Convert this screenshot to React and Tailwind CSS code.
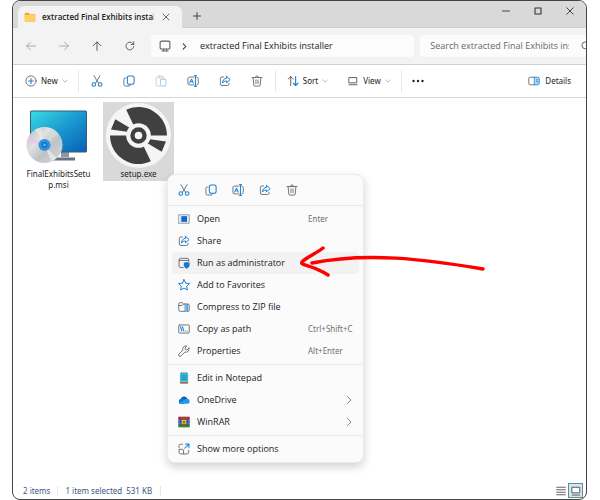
import React from "react";
import clsx from "clsx";

const GRAY = "#5c5c5c";
const BLUE = "#1580d8";

function Icon({ children, className = "size-3", box = "0 0 16 16" }) {
  return (
    <svg
      viewBox={box}
      className={clsx("shrink-0", className)}
      fill="none"
      stroke={GRAY}
      strokeWidth="1.1"
      strokeLinecap="round"
      strokeLinejoin="round"
      aria-hidden="true"
    >
      {children}
    </svg>
  );
}

const CutIcon = () => (
  <Icon>
    <path d="M4 1l5.800 9.800M12 1L6.200 10.800" />
    <circle cx="3.800" cy="12.700" r="2.400" stroke={BLUE} strokeWidth="1.400" />
    <circle cx="12.200" cy="12.700" r="2.400" stroke={BLUE} strokeWidth="1.400" />
  </Icon>
);

const CopyIcon = () => (
  <Icon>
    <path d="M4 4H3.2A2 2 0 0 0 1.2 6v6.5a2.2 2.2 0 0 0 2.2 2.2H8a2.2 2.2 0 0 0 2-1.8" />
    <rect x="5.8" y="1.3" width="9" height="11" rx="2.2" stroke={BLUE} strokeWidth="1.4" />
  </Icon>
);

const PasteIcon = () => (
  <Icon className="size-3 opacity-35">
    <path d="M5 2.8H3a1.5 1.5 0 0 0-1.5 1.5v9A1.5 1.5 0 0 0 3 14.8h3M10 2.8h1.2a1.5 1.5 0 0 1 1.500 1.300" />
    <rect x="4.8" y="1.3" width="5" height="2.6" rx="1.2" />
    <rect x="7.2" y="5.8" width="7.3" height="9" rx="1.5" stroke={BLUE} strokeWidth="1.4" />
  </Icon>
);

const RenameIcon = () => (
  <Icon>
    <path d="M9.3 2.8H3.4a2.2 2.2 0 0 0-2.2 2.2v6a2.2 2.2 0 0 0 2.2 2.2h5.9M13 2.8a2.2 2.2 0 0 1 2 2.2v6a2.2 2.2 0 0 1-2 2.2" />
    <path d="M3.6 10.8L6 5.2l2.4 5.6M4.5 9h3M11.3 1v14M9.8.8h3M9.8 15.2h3" stroke={BLUE} strokeWidth="1.3" />
  </Icon>
);

const ShareIcon = () => (
  <Icon>
    <path d="M6 2.6H4A2.2 2.2 0 0 0 1.8 4.8v7A2.2 2.2 0 0 0 4 14h7.2a2.2 2.2 0 0 0 2.2-2.2v-.9" />
    <path d="M10 1.8l4.8 4.4L10 10.4V8C7.4 8 5.8 8.8 4.6 10.8 4.8 7.2 6.6 4.5 10 4.2z" stroke={BLUE} strokeWidth="1.3" />
  </Icon>
);

const TrashIcon = () => (
  <Icon>
    <path d="M1.4 3.4h13.2M2.8 3.4l.9 10a1.6 1.6 0 0 0 1.600 1.400h5.400a1.600 1.600 0 0 0 1.600-1.400l.9-10M6 3.200a2 2 0 0 1 4 0M6.600 6.500v5M9.400 6.500v5" />
  </Icon>
);

const ChevronDown = () => (
  <Icon className="size-[6px]">
    <path d="M2 5l6 6 6-6" strokeWidth="1.5" stroke="#888" />
  </Icon>
);

const OpenIcon = () => (
  <Icon>
    <rect x="1" y="2.3" width="14" height="11.4" fill="#e4eaf0" stroke="#8b929a" />
    <rect x="4.4" y="4.2" width="7.6" height="7.6" fill="#0f6cc4" stroke="none" />
  </Icon>
);

const AdminIcon = () => (
  <Icon>
    <path d="M7 14H3.6a2.2 2.2 0 0 1-2.2-2.2V4A2.2 2.2 0 0 1 3.6 1.8h8.6A2.2 2.2 0 0 1 14.4 4v2M1.6 4.6h12.6" />
    <path d="M11.6 6.4c1.1.8 2.2 1.1 3.9 1.200v3.200c0 2.100-1.400 3.800-3.900 4.800-2.500-1-3.900-2.700-3.900-4.800V7.600c1.700-.1 2.800-.4 3.900-1.200z" fill="#0f78d4" stroke="none" />
  </Icon>
);

const StarIcon = () => (
  <Icon>
    <path d="M8 .8l2.200 4.700 5.100.6-3.800 3.500 1 5.100L8 12.200l-4.500 2.500 1-5.100L.7 6.100l5.100-.6z" stroke={BLUE} strokeWidth="1.3" />
  </Icon>
);

const ZipIcon = () => (
  <Icon>
    <path d="M9 13.8H3a2 2 0 0 1-2-2V4.2a2 2 0 0 1 2-2h2.6l2 1.8H13a2 2 0 0 1 2 2v5.8a2 2 0 0 1-2 2h-.4M1.2 6h4.4l2-2" />
    <path d="M9.4 4.2v9.4h3.4V4.2M11.2 5.4v1.4M11.2 8.2v1.4M11.2 11v1" stroke={BLUE} />
  </Icon>
);

const PathIcon = () => (
  <Icon>
    <rect x="1" y="2.6" width="14" height="10.8" rx="1.2" />
    <path d="M3.4 5l1.6 5.6M6 5l1.6 5.6M9.6 10.6h.2M12 10.6h.2" stroke={BLUE} strokeWidth="1.4" />
  </Icon>
);

const WrenchIcon = () => (
  <Icon>
    <path d="M14.600 4.200l-2.700 2.500-2-.6-.6-2.100 2.500-2.600a4.200 4.200 0 0 0-5.300 5.400L1.300 12a1.700 1.700 0 0 0 2.600 2.600l5.300-5.200a4.200 4.200 0 0 0 5.400-5.200z" />
  </Icon>
);

const NotepadIcon = () => (
  <Icon>
    <rect x="2.600" y="1.600" width="11" height="12" rx="1" fill="#42bfe2" stroke="none" />
    <path d="M2.600 13.400h11v1.200a.9.9 0 0 1-.9.9H3.500a.9.9 0 0 1-.9-.9z" fill="#b5704a" stroke="none" />
    <path d="M5 5.200h6.400M5 7.600h6.400M5 10h6.400" stroke="#167ba3" />
    <path d="M4.600.8v1.600M6.900.8v1.600M9.200.8v1.600M11.500.8v1.600" stroke="#2b6d8a" />
  </Icon>
);

const OneDriveIcon = () => (
  <Icon>
    <g stroke="none">
      <path d="M3.600 6.800a4.700 4.700 0 0 1 8.800-.9L7.600 13H3.600A3.300 3.300 0 0 1 3.600 6.800z" fill="#0f5fb8" />
      <path d="M3.400 6.800c2.600-.9 4.600.2 7 1.900L3.400 13A3.200 3.200 0 0 1 3.400 6.800z" fill="#1178d0" />
      <path d="M11.800 6.200a3.400 3.400 0 0 1 .6 6.800H3.400c-.9 0-1.600-.3-2.200-.8L9 7.400a4.300 4.300 0 0 1 2.800-1.200z" fill="#1f9bec" />
    </g>
  </Icon>
);

const WinRarIcon = () => (
  <Icon>
    <g stroke="none">
      <rect x=".3" y="1" width="15.400" height="4.600" fill="#b8324e" />
      <rect x=".3" y="5.600" width="15.400" height="4.600" fill="#3b62c4" />
      <rect x=".3" y="10.200" width="15.400" height="4.800" fill="#2f8a41" />
      <rect x="6" y="1" width="4" height="14" fill="#8a5a26" />
      <rect x="5.200" y="5.400" width="5.600" height="4.800" fill="#e8c24a" />
      <rect x="6.900" y="6.800" width="2.200" height="2" fill="#5c3615" />
      <path d="M2.400 1h1v14h-1zM12.600 1h1v14h-1z" fill="#251f38" opacity=".5" />
    </g>
  </Icon>
);

const MoreOptionsIcon = () => (
  <Icon>
    <path d="M6.200 1.600H3.600a2.200 2.200 0 0 0-2.200 2.200V6M1.400 8.800v3.600a2.200 2.200 0 0 0 2.200 2.200h8.400a2.200 2.200 0 0 0 2.200-2.200V9.800M1.600 8.400h3.600a2.200 2.200 0 0 1 2.200 2.200v3.800" />
    <path d="M9.800 1.400h4.800v4.800M14.400 1.600L9 7" stroke={BLUE} strokeWidth="1.400" />
  </Icon>
);

const FolderIcon = () => (
  <Icon className="size-3">
    <path d="M1 3.200c0-.6.4-1 1-1h3.800l1.800 1.700H14c.6 0 1 .4 1 1v8.300c0 .6-.4 1-1 1H2c-.6 0-1-.4-1-1z" fill="#eaa92c" stroke="none" />
    <path d="M1 6.400c0-.6.4-1 1-1h4l1.600-1H14c.6 0 1 .4 1 1v7.800c0 .6-.4 1-1 1H2c-.6 0-1-.4-1-1z" fill="#ffd062" stroke="none" />
  </Icon>
);

function InstallerIcon() {
  return (
    <svg viewBox="0 0 65 65" className="size-[65px]" aria-hidden="true">
      <defs>
        <linearGradient id="screen" x1="0" y1="0" x2="1" y2="1">
          <stop offset="0" stopColor="#38dbe2" />
          <stop offset=".5" stopColor="#1a98d0" />
          <stop offset="1" stopColor="#0861b5" />
        </linearGradient>
        <linearGradient id="disc" x1="0" y1="0" x2="1" y2="1">
          <stop offset="0" stopColor="#b6bbbd" />
          <stop offset=".35" stopColor="#dfe1e2" />
          <stop offset=".6" stopColor="#bfc3c5" />
          <stop offset="1" stopColor="#d8dadb" />
        </linearGradient>
      </defs>
      <path d="M35 48h8v6h-8z" fill="#8d9aa5" />
      <path d="M27 54.500h22v3H27z" fill="#66737f" />
      <rect x="4" y="7.500" width="57" height="42" rx="1.500" fill="#3d5c70" />
      <rect x="5" y="8.500" width="55" height="40" rx=".5" fill="url(#screen)" />
      <circle cx="18.500" cy="42" r="18" fill="url(#disc)" />
      <path d="M18.500 42L1.500 38.500l1.800-5z" fill="#ecc6e6" />
      <path d="M18.500 42l9-15.500 4.500 4z" fill="#cfe0d3" opacity=".7" />
      <path d="M18.500 42l7 16.500 5-3.500z" fill="#eff0f0" opacity=".7" />
      <path d="M18.500 42L9 26.500l6-2z" fill="#eceded" opacity=".6" />
      <circle cx="18.500" cy="42" r="6" fill="#3293dc" />
      <circle cx="18.500" cy="42" r="3" fill="#1470c0" />
      <circle cx="18.500" cy="42" r="1.400" fill="#5ab4f4" />
    </svg>
  );
}

function DiscIcon() {
  return (
    <svg viewBox="0 0 65 65" className="size-[65px]" aria-hidden="true">
      <circle cx="32.500" cy="32.500" r="32.500" fill="#f5f5f5" />
      <g fill="#404040">
        <path d="M32.500 32.500L20.200 6.800A28.500 28.500 0 0 1 61 32.500z" />
        <path d="M32.500 32.500L44.800 58.200A28.500 28.500 0 0 1 4 32.500z" />
        <path d="M21 28.800L5 26.500l4.300-10.200L24 25z" />
        <path d="M44 36.200l16 2.300-4.300 10.200L41 40z" />
      </g>
      <circle cx="32.500" cy="32.500" r="12.300" fill="#f5f5f5" />
      <circle cx="32.500" cy="32.500" r="6" fill="none" stroke="#404040" strokeWidth="4.400" />
    </svg>
  );
}

const menuGroups = [
  [
    { label: "Open", icon: OpenIcon, keys: "Enter" },
    { label: "Share", icon: ShareIcon },
    { label: "Run as administrator", icon: AdminIcon, active: true },
    { label: "Add to Favorites", icon: StarIcon },
    { label: "Compress to ZIP file", icon: ZipIcon },
    { label: "Copy as path", icon: PathIcon, keys: "Ctrl+Shift+C" },
    { label: "Properties", icon: WrenchIcon, keys: "Alt+Enter" },
  ],
  [
    { label: "Edit in Notepad", icon: NotepadIcon },
    { label: "OneDrive", icon: OneDriveIcon, submenu: true },
    { label: "WinRAR", icon: WinRarIcon, submenu: true },
  ],
  [{ label: "Show more options", icon: MoreOptionsIcon }],
];

const quickActions = [
  { label: "Cut", icon: CutIcon },
  { label: "Copy", icon: CopyIcon },
  { label: "Rename", icon: RenameIcon },
  { label: "Share", icon: ShareIcon },
  { label: "Delete", icon: TrashIcon },
];

const toolbarActions = [
  { label: "Cut", icon: CutIcon },
  { label: "Copy", icon: CopyIcon },
  { label: "Paste", icon: PasteIcon, disabled: true },
  { label: "Rename", icon: RenameIcon },
  { label: "Share", icon: ShareIcon },
  { label: "Delete", icon: TrashIcon },
];

function TitleBar() {
  return (
    <header className="flex items-end border-b border-[#cfcfcf] bg-[#d9d9d9] pt-1 pl-[5px]">
      <div className="-mb-px flex h-[22px] w-[164px] items-center rounded-t-md bg-[#f3f3f3] px-1.5">
        <FolderIcon />
        <span className="ml-1.5 w-28 overflow-hidden text-[8px] font-semibold whitespace-nowrap text-[#222]">
          extracted Final Exhibits installer
        </span>
        <button aria-label="Close tab" className="ml-2">
          <Icon className="size-2">
            <path d="M2 2l12 12M14 2L2 14" strokeWidth="1.8" />
          </Icon>
        </button>
      </div>
      <button aria-label="New tab" className="ml-[11px] flex h-[22px] items-center">
        <Icon className="size-2">
          <path d="M8 1v14M1 8h14" strokeWidth="2" stroke="#444" />
        </Icon>
      </button>
      <div className="mb-3 ml-auto flex items-center gap-6 pr-3">
        <button aria-label="Minimize">
          <Icon className="size-2">
            <path d="M1 8h14" strokeWidth="1.8" stroke="#333" />
          </Icon>
        </button>
        <button aria-label="Maximize">
          <Icon className="size-2">
            <path d="M2 2h12v12H2z" strokeWidth="2.200" stroke="#333" />
          </Icon>
        </button>
        <button aria-label="Close">
          <Icon className="size-2">
            <path d="M1.500 1.500l13 13M14.500 1.500l-13 13" strokeWidth="1.800" stroke="#333" />
          </Icon>
        </button>
      </div>
    </header>
  );
}

function NavBar() {
  return (
    <nav className="flex items-center border-b border-[#cfcfcf] bg-[#f3f3f3] py-[7px] pl-[13px]">
      <div className="flex items-center gap-[23px]">
        <button aria-label="Back" disabled>
          <Icon className="size-[10px] opacity-50">
            <path d="M15 8H1M7 2L1 8l6 6" strokeWidth="1.500" />
          </Icon>
        </button>
        <button aria-label="Forward" disabled>
          <Icon className="size-[10px] opacity-50">
            <path d="M1 8h14M9 2l6 6-6 6" strokeWidth="1.500" />
          </Icon>
        </button>
        <button aria-label="Up">
          <Icon className="size-[10px]">
            <path d="M8 15V1.500M2 7.500l6-6 6 6" strokeWidth="1.600" />
          </Icon>
        </button>
        <button aria-label="Refresh">
          <Icon className="size-[10px]">
            <path d="M14 8.500A6.200 6.200 0 1 1 12.500 4L14 5.600M14 1.200v4.400H9.800" strokeWidth="1.500" />
          </Icon>
        </button>
      </div>
      <div className="ml-4 flex h-[22px] min-w-0 flex-[272] items-center rounded bg-[#fcfcfc] pl-2">
        <Icon>
          <rect x="1.500" y="1.500" width="13" height="10.500" rx="1.800" strokeWidth="1.400" />
          <path d="M6 12.500v2M10 12.500v2M4 14.600h8" strokeWidth="1.400" />
        </Icon>
        <Icon className="ml-2.5 size-[7px]">
          <path d="M5 2l6 6-6 6" strokeWidth="2.400" stroke="#333" />
        </Icon>
        <span className="ml-3 text-[9px] whitespace-nowrap text-[#222]">
          extracted Final Exhibits installer
        </span>
      </div>
      <label className="ml-1.5 flex h-[22px] min-w-0 flex-[166] items-center overflow-hidden rounded-l bg-[#fcfcfc] pl-[10px]">
        <input
          type="text"
          aria-label="Search"
          placeholder="Search extracted Final Exhibits installer"
          className="w-[139px] shrink-0 text-[9px] outline-none placeholder:text-[#686868]"
        />
        <Icon className="ml-3 size-[10px]">
          <circle cx="7" cy="7" r="5.500" strokeWidth="1.500" />
          <path d="M11 11l4 4" />
        </Icon>
      </label>
    </nav>
  );
}

function ToolBar() {
  return (
    <div className="flex h-[33px] items-center border-b border-[#d6d6d6] bg-white pr-[15px] pl-3 font-['Noto_Sans',sans-serif] text-[8px] text-[#222]">
      <button className="flex items-center">
        <Icon>
          <circle cx="8" cy="8" r="6.800" />
          <path d="M8 4.800v6.400M4.800 8h6.400" stroke={BLUE} strokeWidth="1.400" />
        </Icon>
        <span className="mr-1 ml-1">New</span>
        <ChevronDown />
      </button>
      <span className="ml-[10px] h-[22px] w-px bg-[#e8e8e8]" />
      <div className="ml-3 flex items-center gap-[20px]">
        {toolbarActions.map(({ label, icon: Glyph, disabled }) => (
          <button key={label} aria-label={label} disabled={disabled}>
            <Glyph />
          </button>
        ))}
      </div>
      <span className="ml-3 h-[22px] w-px bg-[#e8e8e8]" />
      <button className="ml-[11px] flex items-center">
        <Icon>
          <path d="M5 14V2M1.500 5.500L5 2l3.500 3.500" strokeWidth="1.300" />
          <path d="M11.500 2v12M8.500 11l3 3 3-3" stroke={BLUE} strokeWidth="1.500" />
        </Icon>
        <span className="mr-1 ml-1">Sort</span>
        <ChevronDown />
      </button>
      <button className="ml-5 flex items-center">
        <Icon className="size-[10px]">
          <path d="M2 2.500h12v8.500H2zM1.500 14h13" strokeWidth="1.500" />
        </Icon>
        <span className="mr-1 ml-[5px]">View</span>
        <ChevronDown />
      </button>
      <span className="ml-[10px] h-[22px] w-px bg-[#e8e8e8]" />
      <button aria-label="See more" className="ml-[10px]">
        <Icon>
          <g fill="#222" stroke="none">
            <circle cx="2" cy="8" r="1.600" />
            <circle cx="8" cy="8" r="1.600" />
            <circle cx="14" cy="8" r="1.600" />
          </g>
        </Icon>
      </button>
      <button className="ml-auto flex items-center gap-[5px]">
        <Icon>
          <path d="M9 13H3a2 2 0 0 1-2-2V5a2 2 0 0 1 2-2h6" />
          <path d="M9 3h4a2 2 0 0 1 2 2v6a2 2 0 0 1-2 2H9z" stroke={BLUE} fill="#b9dcf7" />
          <path d="M11.200 6.500h1.800M11.200 9h1.800" stroke={BLUE} />
        </Icon>
        Details
      </button>
    </div>
  );
}

function FileTile({ name, selected, children }) {
  return (
    <button
      className={clsx(
        "flex w-[71px] flex-col items-center self-start px-[3px] pt-px pb-0.5 font-['Noto_Sans',sans-serif] text-[8px] leading-[11px] text-[#222]",
        selected && "bg-[#d9d9d9]"
      )}
    >
      {children}
      <span className="w-full break-all">{name}</span>
    </button>
  );
}

function ContextMenu() {
  return (
    <div
      role="menu"
      className="absolute top-[76px] left-[154px] w-[197px] rounded-lg border border-[#ececec] bg-[#fbfbfb] shadow-[0_4px_10px_rgba(0,0,0,0.18)]"
    >
      <div className="flex h-[30px] items-center gap-[15px] pl-[10px]">
        {quickActions.map(({ label, icon: Glyph }) => (
          <button key={label} role="menuitem" aria-label={label}>
            <Glyph />
          </button>
        ))}
      </div>
      {menuGroups.map((group) => (
        <div key={group[0].label} className="border-t border-[#e9e9e9] px-1 py-0.5">
          {group.map(({ label, icon: Glyph, keys, submenu, active }) => (
            <button
              key={label}
              role="menuitem"
              className={clsx(
                "flex h-[22px] w-full items-center rounded px-1.5 text-left text-[9px] text-[#222]",
                active && "bg-[#f2f2f2]"
              )}
            >
              <Glyph />
              <span className="ml-[7px] w-[111px] whitespace-nowrap">{label}</span>
              {keys && (
                <span className="font-['Noto_Sans',sans-serif] text-[8px] whitespace-nowrap text-[#6f6f6f]">
                  {keys}
                </span>
              )}
              {submenu && (
                <Icon className="ml-auto size-2">
                  <path d="M5 1l7 7-7 7" strokeWidth="1.500" />
                </Icon>
              )}
            </button>
          ))}
        </div>
      ))}
    </div>
  );
}

function Arrow() {
  return (
    <svg
      viewBox="0 0 192 34"
      className="pointer-events-none absolute top-[146px] left-[284px] h-[34px] w-[192px]"
      fill="none"
      stroke="#fe0000"
      strokeWidth="3.500"
      strokeLinecap="round"
      strokeLinejoin="round"
      aria-hidden="true"
    >
      <path d="M186 25C127 15 69 8 15 19" />
      <path d="M26 4C20 9 8 14 5 18C3 22 14 20 31 31" />
    </svg>
  );
}

function StatusBar() {
  return (
    <footer className="flex h-[17px] items-center pl-[10px] font-['Noto_Sans',sans-serif] text-[8px] text-[#3b5680]">
      <span>2 items</span>
      <span className="mx-[7px] h-2.5 w-px bg-[#e3e8ef]" />
      <span>1 item selected</span>
      <span className="ml-1">531 KB</span>
      <span className="ml-2 h-2.5 w-px bg-[#e3e8ef]" />
      <button aria-label="Details view" className="ml-auto">
        <Icon className="size-[10px]">
          <path d="M1 2h14M1 6h14M1 10h14M1 14h14" strokeWidth="1.500" />
        </Icon>
      </button>
      <button
        aria-label="Large icons view"
        className="mr-[3px] ml-[2px] flex size-[15px] items-center justify-center border border-[#6b8796] bg-[#cfe9f5]"
      >
        <Icon className="size-[10px]">
          <path d="M2 2h12v9H2z" fill="#fff" strokeWidth="1.600" />
          <path d="M2 14.500h12" strokeWidth="1.500" />
        </Icon>
      </button>
    </footer>
  );
}

export default function App() {
  return (
    <div className="flex min-h-screen bg-white pr-[13px] pl-3 font-['Open_Sans','Noto_Sans',sans-serif]">
      <div className="flex min-w-0 flex-1 flex-col overflow-hidden rounded-lg border border-[#444] bg-white">
        <TitleBar />
        <NavBar />
        <ToolBar />
        <main className="relative flex flex-1 gap-[9px] pt-1 pl-[10px]">
          <FileTile name="FinalExhibitsSetup.msi">
            <InstallerIcon />
          </FileTile>
          <FileTile name="setup.exe" selected>
            <DiscIcon />
          </FileTile>
          <ContextMenu />
          <Arrow />
        </main>
        <StatusBar />
      </div>
    </div>
  );
}
